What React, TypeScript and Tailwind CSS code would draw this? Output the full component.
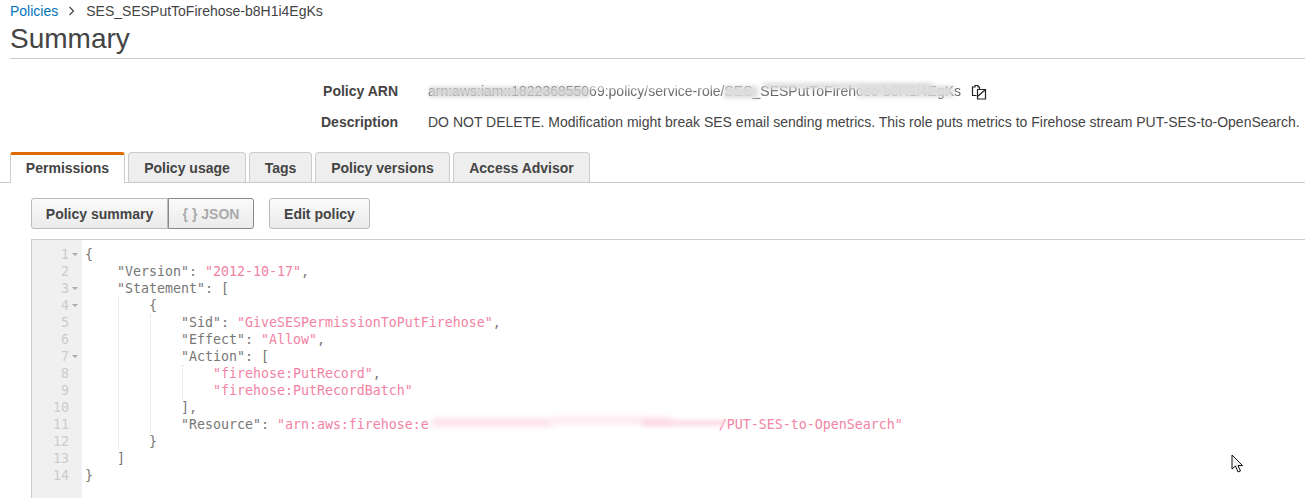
import React from "react";

const tabs = [
  { label: "Policy usage", w: "w-[118px]" },
  { label: "Tags", w: "w-[63px]" },
  { label: "Policy versions", w: "w-[135px]" },
  { label: "Access Advisor", w: "w-[137px]" },
];

const fold = [1, 3, 4, 7];

const S: React.FC<{ children: React.ReactNode }> = ({ children }) => (
  <span className="text-[#f283a3]">{children}</span>
);

const code: React.ReactNode[] = [
  "{",
  <>    "Version": <S>"2012-10-17"</S>,</>,
  <>    "Statement": [</>,
  "        {",
  <>            "Sid": <S>"GiveSESPermissionToPutFirehose"</S>,</>,
  <>            "Effect": <S>"Allow"</S>,</>,
  <>            "Action": [</>,
  <>                <S>"firehose:PutRecord"</S>,</>,
  <>                <S>"firehose:PutRecordBatch"</S></>,
  "            ],",
  <>            "Resource": <S>"arn:aws:firehose:e<span className="inline-block h-[17px] w-[290px] align-top" />/PUT-SES-to-OpenSearch"</S></>,
  "        }",
  "    ]",
  "}",
];

const CopyIcon = () => (
  <svg width="16" height="16" viewBox="0 0 16 16" fill="none" stroke="#222" strokeWidth="1.2">
    <path d="M5.500 11.500H1.500V3h2.500V1.500h3V3h1.500v2" />
    <path d="M6.500 5.500h8v9.500h-8z" />
    <path d="M6.500 12.500l8-7" />
  </svg>
);

const Cursor = () => (
  <svg width="13" height="20" viewBox="0 0 13 20" className="absolute left-[1231px] top-[454px]">
    <path d="M1 1v14l3.500-3 2.500 6 2.500-1-2.500-5.500h4.500z" fill="#f4f4f4" stroke="#111" strokeWidth="1" />
  </svg>
);

const App: React.FC = () => {
  return (
    <div className="relative h-[498px] w-[1305px] overflow-hidden bg-white font-['Liberation_Sans',Arial,sans-serif] text-[14px] text-[#444]">
      <div className="pl-[10px]">
        <div className="flex h-[22px] items-center">
          <span className="text-[#0073bb]">Policies</span>
          <svg width="8" height="10" viewBox="0 0 8 10" className="ml-[10px] mr-[10px]" fill="none" stroke="#444" strokeWidth="1.2">
            <path d="M1.500 1l4 4-4 4" />
          </svg>
          <span>SES_SESPutToFirehose-b8H1i4EgKs</span>
        </div>
        <h1 className="h-[37px] border-b border-[#ccc] text-[28px] leading-[33px] font-normal">Summary</h1>
      </div>

      <div className="mt-[24px] grid grid-cols-[398px_1fr] gap-x-[30px] gap-y-[14px] leading-[17px]">
        <div className="text-right font-bold">Policy ARN</div>
        <div className="relative flex items-center">
          <span className="text-[#666] blur-[0.6px]">arn:aws:iam::182236855069:policy/service-role/SES_SESPutToFirehose-b8H1i4EgKs</span>
          <span className="absolute left-[2px] top-[4px] h-[10px] w-[160px] bg-[#d2d2d2]/90 blur-[2px]" />
          <span className="absolute left-[160px] top-[0px] h-[6px] w-[135px] bg-white/70 blur-[2px]" />
          <span className="absolute left-[296px] top-[3px] h-[12px] w-[34px] bg-[#ddd] blur-[2px]" />
          <span className="absolute left-[335px] top-[0px] h-[6px] w-[170px] bg-[#ddd] blur-[2px]" />
          <span className="absolute left-[430px] top-[3px] h-[11px] w-[95px] bg-[#ddd] blur-[2px]" />
          <span className="ml-[10px]"><CopyIcon /></span>
        </div>
        <div className="text-right font-bold">Description</div>
        <div className="whitespace-nowrap">DO NOT DELETE. Modification might break SES email sending metrics. This role puts metrics to Firehose stream PUT-SES-to-OpenSearch.</div>
      </div>

      <div className="mt-[21px] flex h-[31px] gap-[3px] border-b border-[#ccc] pl-[10px] font-bold">
        <div className="z-10 flex h-[31px] w-[115px] items-center justify-center rounded-t-[3px] border-x border-t-[3px] border-[#ccc] border-t-[#dd6b00] bg-white pb-[1px]">
          Permissions
        </div>
        {tabs.map((t) => (
          <div key={t.label} className={`${t.w} flex h-[30px] items-center justify-center rounded-t-[4px] border-x border-t border-[#ccc] bg-[#eee] pt-[1px]`}>
            {t.label}
          </div>
        ))}
      </div>

      <div className="flex pl-[31px] pt-[15px] font-bold">
        <div className="flex h-[31px]">
          <div className="flex w-[137px] items-center justify-center rounded-l-[3px] border border-[#bbb] bg-gradient-to-b from-[#fafafa] to-[#ebebeb] pt-[1px]">Policy summary</div>
          <div className="flex w-[86px] items-center justify-center rounded-r-[3px] border border-[#888] bg-gradient-to-b from-[#fafafa] to-[#ebebeb] pt-[1px] text-[#aaa]">{"{ } JSON"}</div>
        </div>
        <div className="ml-[15px] flex h-[31px] w-[101px] items-center justify-center rounded-[3px] border border-[#bbb] bg-gradient-to-b from-[#fafafa] to-[#ebebeb] pt-[1px]">Edit policy</div>
      </div>

      <div className="ml-[31px] mt-[10px] flex h-[260px] border-l border-t border-[#ccc] font-['DejaVu_Sans_Mono',monospace] text-[13.29px] leading-[17px]">
        <div className="w-[50px] bg-[#f0f0f0] pt-[6px] text-[#ccc]">
          {code.map((_, i) => (
            <div key={i} className="relative h-[17px] pr-[13px] text-right">
              {i + 1}
              {fold.includes(i + 1) && (
                <span className="absolute right-[4px] top-[7px] h-0 w-0 border-x-[3px] border-t-[3px] border-x-transparent border-t-[#aaa]" />
              )}
            </div>
          ))}
        </div>
        <div className="relative flex-1 whitespace-pre pl-[3px] pt-[6px] text-[#777]">
          {code.map((line, i) => (
            <div key={i} className="h-[17px]">{line}</div>
          ))}
          <span className="absolute left-[36px] top-[57px] h-[153px] border-l border-dotted border-[#ddd]" />
          <span className="absolute left-[68px] top-[74px] h-[119px] border-l border-dotted border-[#ddd]" />
          <span className="absolute left-[100px] top-[125px] h-[34px] border-l border-dotted border-[#ddd]" />
          <span className="absolute left-[350px] top-[179px] h-[7px] w-[120px] bg-[#fbd3de]/80 blur-[3px]" />
          <span className="absolute left-[470px] top-[177px] h-[7px] w-[120px] bg-[#fce0e7]/80 blur-[3px]" />
          <span className="absolute left-[560px] top-[180px] h-[6px] w-[84px] bg-[#fbd3de]/80 blur-[2px]" />
        </div>
      </div>
      <Cursor />
    </div>
  );
};

export default App;
